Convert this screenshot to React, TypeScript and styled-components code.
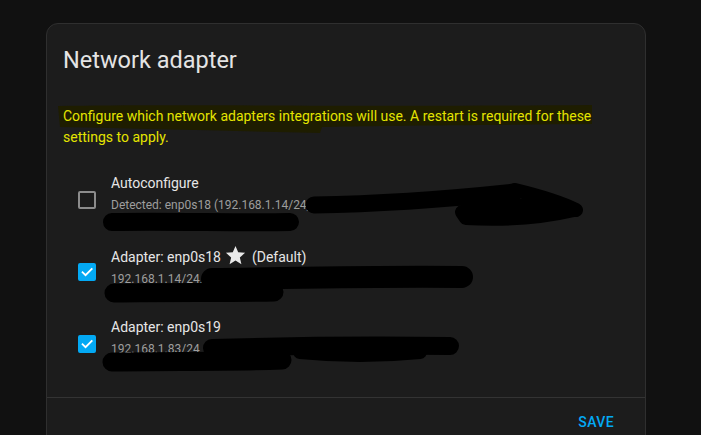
import styled, { createGlobalStyle } from "styled-components";

const GlobalStyle = createGlobalStyle`
  html, body {
    margin: 0;
    padding: 0;
    background: #111111;
    overflow: hidden;
  }
  body {
    font-family: Roboto, "Noto Sans", sans-serif;
    -webkit-font-smoothing: antialiased;
  }
`;

type Adapter = {
  name: string;
  detail: string;
  checked: boolean;
  isDefault?: boolean;
};

const adapters: Adapter[] = [
  {
    name: "Autoconfigure",
    detail: "Detected: enp0s18 (192.168.1.14/24,",
    checked: false,
  },
  {
    name: "Adapter: enp0s18",
    detail: "192.168.1.14/24,",
    checked: true,
    isDefault: true,
  },
  { name: "Adapter: enp0s19", detail: "192.168.1.83/24,", checked: true },
];

function StarIcon() {
  return (
    <StyledStar viewBox="0 0 24 24" aria-hidden="true">
      <path
        fill="#e8e8e8"
        d="M12,17.27L18.18,21L16.54,13.97L22,9.24L14.81,8.62L12,2L9.19,8.62L2,9.24L7.45,13.97L5.82,21L12,17.27Z"
      />
    </StyledStar>
  );
}

function CheckMark() {
  return (
    <svg width="14" height="14" viewBox="0 0 24 24" aria-hidden="true">
      <path
        d="M4.5 12.5l5 5L20 7"
        fill="none"
        stroke="#ffffff"
        strokeWidth="3.2"
        strokeLinecap="square"
      />
    </svg>
  );
}

function App() {
  return (
    <StyledPage>
      <GlobalStyle />
      <StyledCard>
        <StyledHeader>Network adapter</StyledHeader>

        <StyledDescription>
          <StyledHighlight viewBox="0 0 540 32" aria-hidden="true">
            <path
              d="M0 1 C120 -1 300 2 534 0 L534 19 C420 20 300 21 264 22 L262 28 C180 26 90 24 2 22 Z"
              fill="#1e1d00"
            />
          </StyledHighlight>
          <StyledDescriptionText>
            Configure which network adapters integrations will use. A restart
            is required for these settings to apply.
          </StyledDescriptionText>
        </StyledDescription>

        <StyledList>
          {adapters.map((a) => (
            <StyledRow key={a.name}>
              <StyledCheckbox $checked={a.checked}>
                {a.checked && <CheckMark />}
              </StyledCheckbox>
              <StyledRowText>
                <StyledPrimary>
                  {a.name}
                  {a.isDefault && (
                    <>
                      {" "}
                      <StarIcon /> (Default)
                    </>
                  )}
                </StyledPrimary>
                <StyledSecondary>{a.detail}</StyledSecondary>
              </StyledRowText>
            </StyledRow>
          ))}
        </StyledList>

        <StyledActions>
          <StyledButton>Save</StyledButton>
        </StyledActions>
      </StyledCard>

      {/* redaction scribbles drawn over the screenshot */}
      <StyledScribbles viewBox="0 0 701 435" aria-hidden="true">
        <g
          fill="none"
          stroke="#000"
          strokeLinecap="round"
          strokeLinejoin="round"
        >
          <path d="M314 205 C380 204 440 200 515 192" strokeWidth="17" />
          <path
            d="M462 212 C500 206 540 202 574 210 C540 218 500 220 466 218 Z"
            strokeWidth="14"
            fill="#000"
          />
          <path d="M515 190 C540 196 560 202 576 210" strokeWidth="14" />
          <path d="M112 222 C170 221 240 223 290 222" strokeWidth="18" />

          <path d="M212 279 C300 278 380 276 462 277" strokeWidth="22" />
          <path d="M114 293 C170 292 230 293 274 292" strokeWidth="19" />

          <path d="M212 348 C280 346 360 345 450 346" strokeWidth="18" />
          <path d="M300 352 C340 356 380 356 420 352" strokeWidth="14" />
          <path d="M112 362 C170 361 230 362 282 360" strokeWidth="19" />
        </g>
      </StyledScribbles>
    </StyledPage>
  );
}

export default App;

const StyledPage = styled.div`
  position: relative;
  width: 701px;
  height: 435px;
  padding: 23px 0 0 46px;
  box-sizing: border-box;
  overflow: hidden;
`;

const StyledCard = styled.div`
  width: 600px;
  box-sizing: border-box;
  background: #1c1c1c;
  border: 1px solid #2f2f2f;
  border-radius: 12px;
  display: flex;
  flex-direction: column;
`;

const StyledHeader = styled.div`
  padding: 20px 16px 0;
  font-size: 23.5px;
  line-height: 32px;
  font-weight: 400;
  color: #e4e4e4;
`;

const StyledDescription = styled.div`
  position: relative;
  margin: 30px 16px 0;
`;

const StyledHighlight = styled.svg`
  position: absolute;
  left: -5px;
  top: -1px;
  width: 540px;
  height: 32px;
`;

const StyledDescriptionText = styled.p`
  position: relative;
  margin: 0;
  font-size: 14px;
  line-height: 21px;
  color: #e4e400;
`;

const StyledList = styled.div`
  display: flex;
  flex-direction: column;
  padding: 16px 0 17px;
`;

const StyledRow = styled.div`
  height: 72px;
  display: flex;
  align-items: center;
  gap: 15px;
  padding-left: 31px;
`;

const StyledCheckbox = styled.div<{ $checked: boolean }>`
  width: 18px;
  height: 18px;
  box-sizing: border-box;
  border-radius: 2px;
  display: flex;
  align-items: center;
  justify-content: center;
  flex-shrink: 0;
  background: ${(p) => (p.$checked ? "#03a9f4" : "transparent")};
  border: 2px solid ${(p) => (p.$checked ? "#03a9f4" : "#8c8c8c")};
`;

const StyledRowText = styled.div`
  display: flex;
  flex-direction: column;
  gap: 2px;
  padding-bottom: 12px;
`;

const StyledPrimary = styled.div`
  font-size: 14px;
  line-height: 20px;
  color: #e6e6e6;
  white-space: nowrap;
`;

const StyledSecondary = styled.div`
  font-size: 12px;
  line-height: 20px;
  color: #9e9e9e;
  white-space: nowrap;
`;

const StyledStar = styled.svg`
  width: 23px;
  height: 23px;
  vertical-align: -5px;
  margin-right: 1px;
`;

const StyledActions = styled.div`
  border-top: 1px solid #333333;
  display: flex;
  justify-content: flex-end;
  padding: 6px 23px 14px;
`;

const StyledButton = styled.button`
  background: none;
  border: none;
  height: 36px;
  padding: 0 8px;
  font-family: Roboto, sans-serif;
  font-size: 14px;
  font-weight: 500;
  letter-spacing: 0.4px;
  text-transform: uppercase;
  color: #03a9f4;
  cursor: pointer;
`;

const StyledScribbles = styled.svg`
  position: absolute;
  left: 0;
  top: 0;
  width: 701px;
  height: 435px;
  pointer-events: none;
`;
